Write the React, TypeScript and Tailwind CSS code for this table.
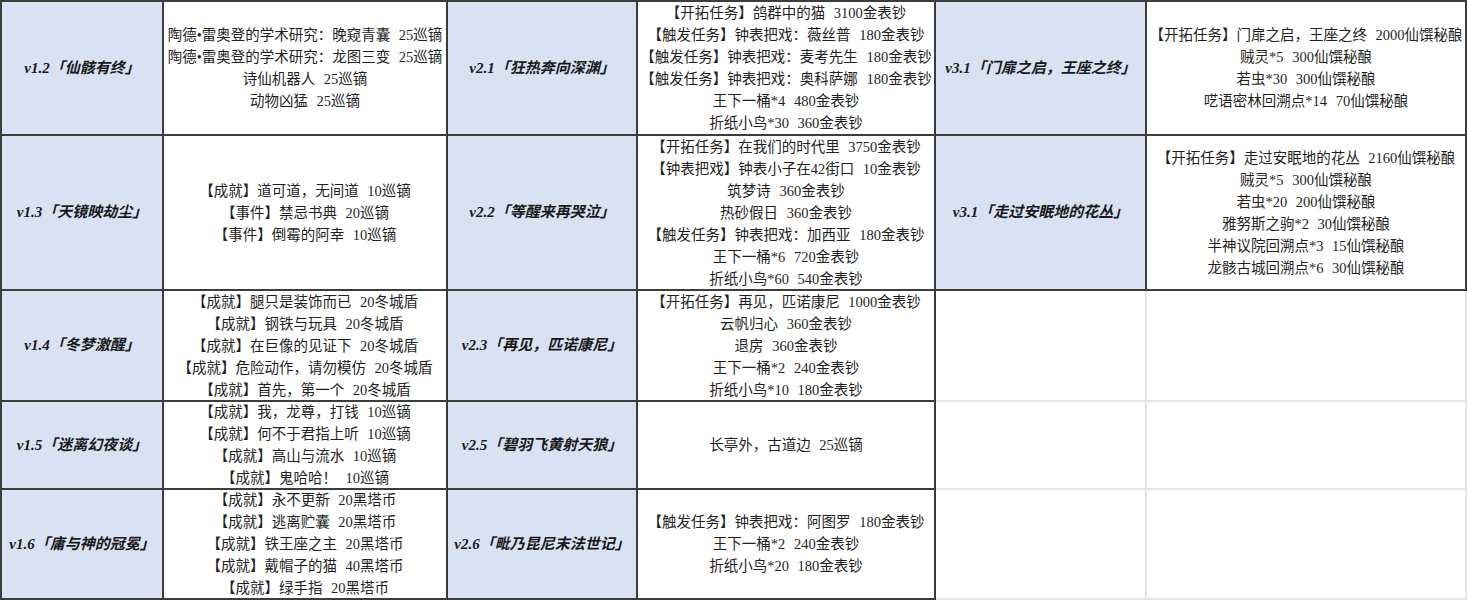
import React from "react";

type Cell =
  | { kind: "label"; text: string }
  | { kind: "content"; lines: string[] }
  | { kind: "empty" };

const rows: Cell[][] = [
  [
    { kind: "label", text: "v1.2「仙骸有终」" },
    {
      kind: "content",
      lines: [
        "陶德•雷奥登的学术研究：晚窥青囊 25巡镝",
        "陶德•雷奥登的学术研究：龙图三变 25巡镝",
        "诗仙机器人 25巡镝",
        "动物凶猛 25巡镝",
      ],
    },
    { kind: "label", text: "v2.1「狂热奔向深渊」" },
    {
      kind: "content",
      lines: [
        "【开拓任务】鸽群中的猫 3100金表钞",
        "【触发任务】钟表把戏：薇丝普 180金表钞",
        "【触发任务】钟表把戏：麦考先生 180金表钞",
        "【触发任务】钟表把戏：奥科萨娜 180金表钞",
        "王下一桶*4 480金表钞",
        "折纸小鸟*30 360金表钞",
      ],
    },
    { kind: "label", text: "v3.1「门扉之启，王座之终」" },
    {
      kind: "content",
      lines: [
        "【开拓任务】门扉之启，王座之终 2000仙馔秘酿",
        "贼灵*5 300仙馔秘酿",
        "若虫*30 300仙馔秘酿",
        "呓语密林回溯点*14 70仙馔秘酿",
      ],
    },
  ],
  [
    { kind: "label", text: "v1.3「天镜映劫尘」" },
    {
      kind: "content",
      lines: [
        "【成就】道可道，无间道 10巡镝",
        "【事件】禁忌书典 20巡镝",
        "【事件】倒霉的阿幸 10巡镝",
      ],
    },
    { kind: "label", text: "v2.2「等醒来再哭泣」" },
    {
      kind: "content",
      lines: [
        "【开拓任务】在我们的时代里 3750金表钞",
        "【钟表把戏】钟表小子在42街口 10金表钞",
        "筑梦诗 360金表钞",
        "热砂假日 360金表钞",
        "【触发任务】钟表把戏：加西亚 180金表钞",
        "王下一桶*6 720金表钞",
        "折纸小鸟*60 540金表钞",
      ],
    },
    { kind: "label", text: "v3.1「走过安眠地的花丛」" },
    {
      kind: "content",
      lines: [
        "【开拓任务】走过安眠地的花丛 2160仙馔秘酿",
        "贼灵*5 300仙馔秘酿",
        "若虫*20 200仙馔秘酿",
        "雅努斯之驹*2 30仙馔秘酿",
        "半神议院回溯点*3 15仙馔秘酿",
        "龙骸古城回溯点*6 30仙馔秘酿",
      ],
    },
  ],
  [
    { kind: "label", text: "v1.4「冬梦激醒」" },
    {
      kind: "content",
      lines: [
        "【成就】腿只是装饰而已 20冬城盾",
        "【成就】钢铁与玩具 20冬城盾",
        "【成就】在巨像的见证下 20冬城盾",
        "【成就】危险动作，请勿模仿 20冬城盾",
        "【成就】首先，第一个 20冬城盾",
      ],
    },
    { kind: "label", text: "v2.3「再见，匹诺康尼」" },
    {
      kind: "content",
      lines: [
        "【开拓任务】再见，匹诺康尼 1000金表钞",
        "云帆归心 360金表钞",
        "退房 360金表钞",
        "王下一桶*2 240金表钞",
        "折纸小鸟*10 180金表钞",
      ],
    },
    { kind: "empty" },
    { kind: "empty" },
  ],
  [
    { kind: "label", text: "v1.5「迷离幻夜谈」" },
    {
      kind: "content",
      lines: [
        "【成就】我，龙尊，打钱 10巡镝",
        "【成就】何不于君指上听 10巡镝",
        "【成就】高山与流水 10巡镝",
        "【成就】鬼哈哈！ 10巡镝",
      ],
    },
    { kind: "label", text: "v2.5「碧羽飞黄射天狼」" },
    { kind: "content", lines: ["长亭外，古道边 25巡镝"] },
    { kind: "empty" },
    { kind: "empty" },
  ],
  [
    { kind: "label", text: "v1.6「庸与神的冠冕」" },
    {
      kind: "content",
      lines: [
        "【成就】永不更新 20黑塔币",
        "【成就】逃离贮囊 20黑塔币",
        "【成就】铁王座之主 20黑塔币",
        "【成就】戴帽子的猫 40黑塔币",
        "【成就】绿手指 20黑塔币",
      ],
    },
    { kind: "label", text: "v2.6「毗乃昆尼末法世记」" },
    {
      kind: "content",
      lines: [
        "【触发任务】钟表把戏：阿图罗 180金表钞",
        "王下一桶*2 240金表钞",
        "折纸小鸟*20 180金表钞",
      ],
    },
    { kind: "empty" },
    { kind: "empty" },
  ],
];

function CellView({ cell }: { cell: Cell }) {
  if (cell.kind === "label") {
    return (
      <div className="flex items-center justify-center bg-[#d9e2f3] border-r-2 border-b-2 border-[#3c3c3c] text-[15px] font-bold italic text-[#1a1a1a] whitespace-nowrap">
        {cell.text}
      </div>
    );
  }
  if (cell.kind === "content") {
    return (
      <div className="flex flex-col items-center justify-center bg-white border-r-2 border-b-2 border-[#3c3c3c] text-[14.5px] leading-[22px] text-[#1f1f1f] whitespace-nowrap [word-spacing:5px]">
        {cell.lines.map((l, i) => (
          <div key={i}>{l}</div>
        ))}
      </div>
    );
  }
  return <div className="bg-white border-r-2 border-b-2 border-[#e4e4e4]" />;
}

export default function App() {
  return (
    <div
      className="w-[1467px] h-[600px] overflow-hidden bg-white"
      style={{ fontFamily: '"Liberation Serif", "Noto Sans CJK SC", serif' }}
    >
      <div className="grid grid-cols-[162px_284px_190px_298px_211px_320px] grid-rows-[134px_155px_111px_88px_110px] border-l-2 border-t-2 border-[#3c3c3c]">
        {rows.flatMap((r, ri) =>
          r.map((c, ci) => <CellView key={`${ri}-${ci}`} cell={c} />)
        )}
      </div>
    </div>
  );
}
